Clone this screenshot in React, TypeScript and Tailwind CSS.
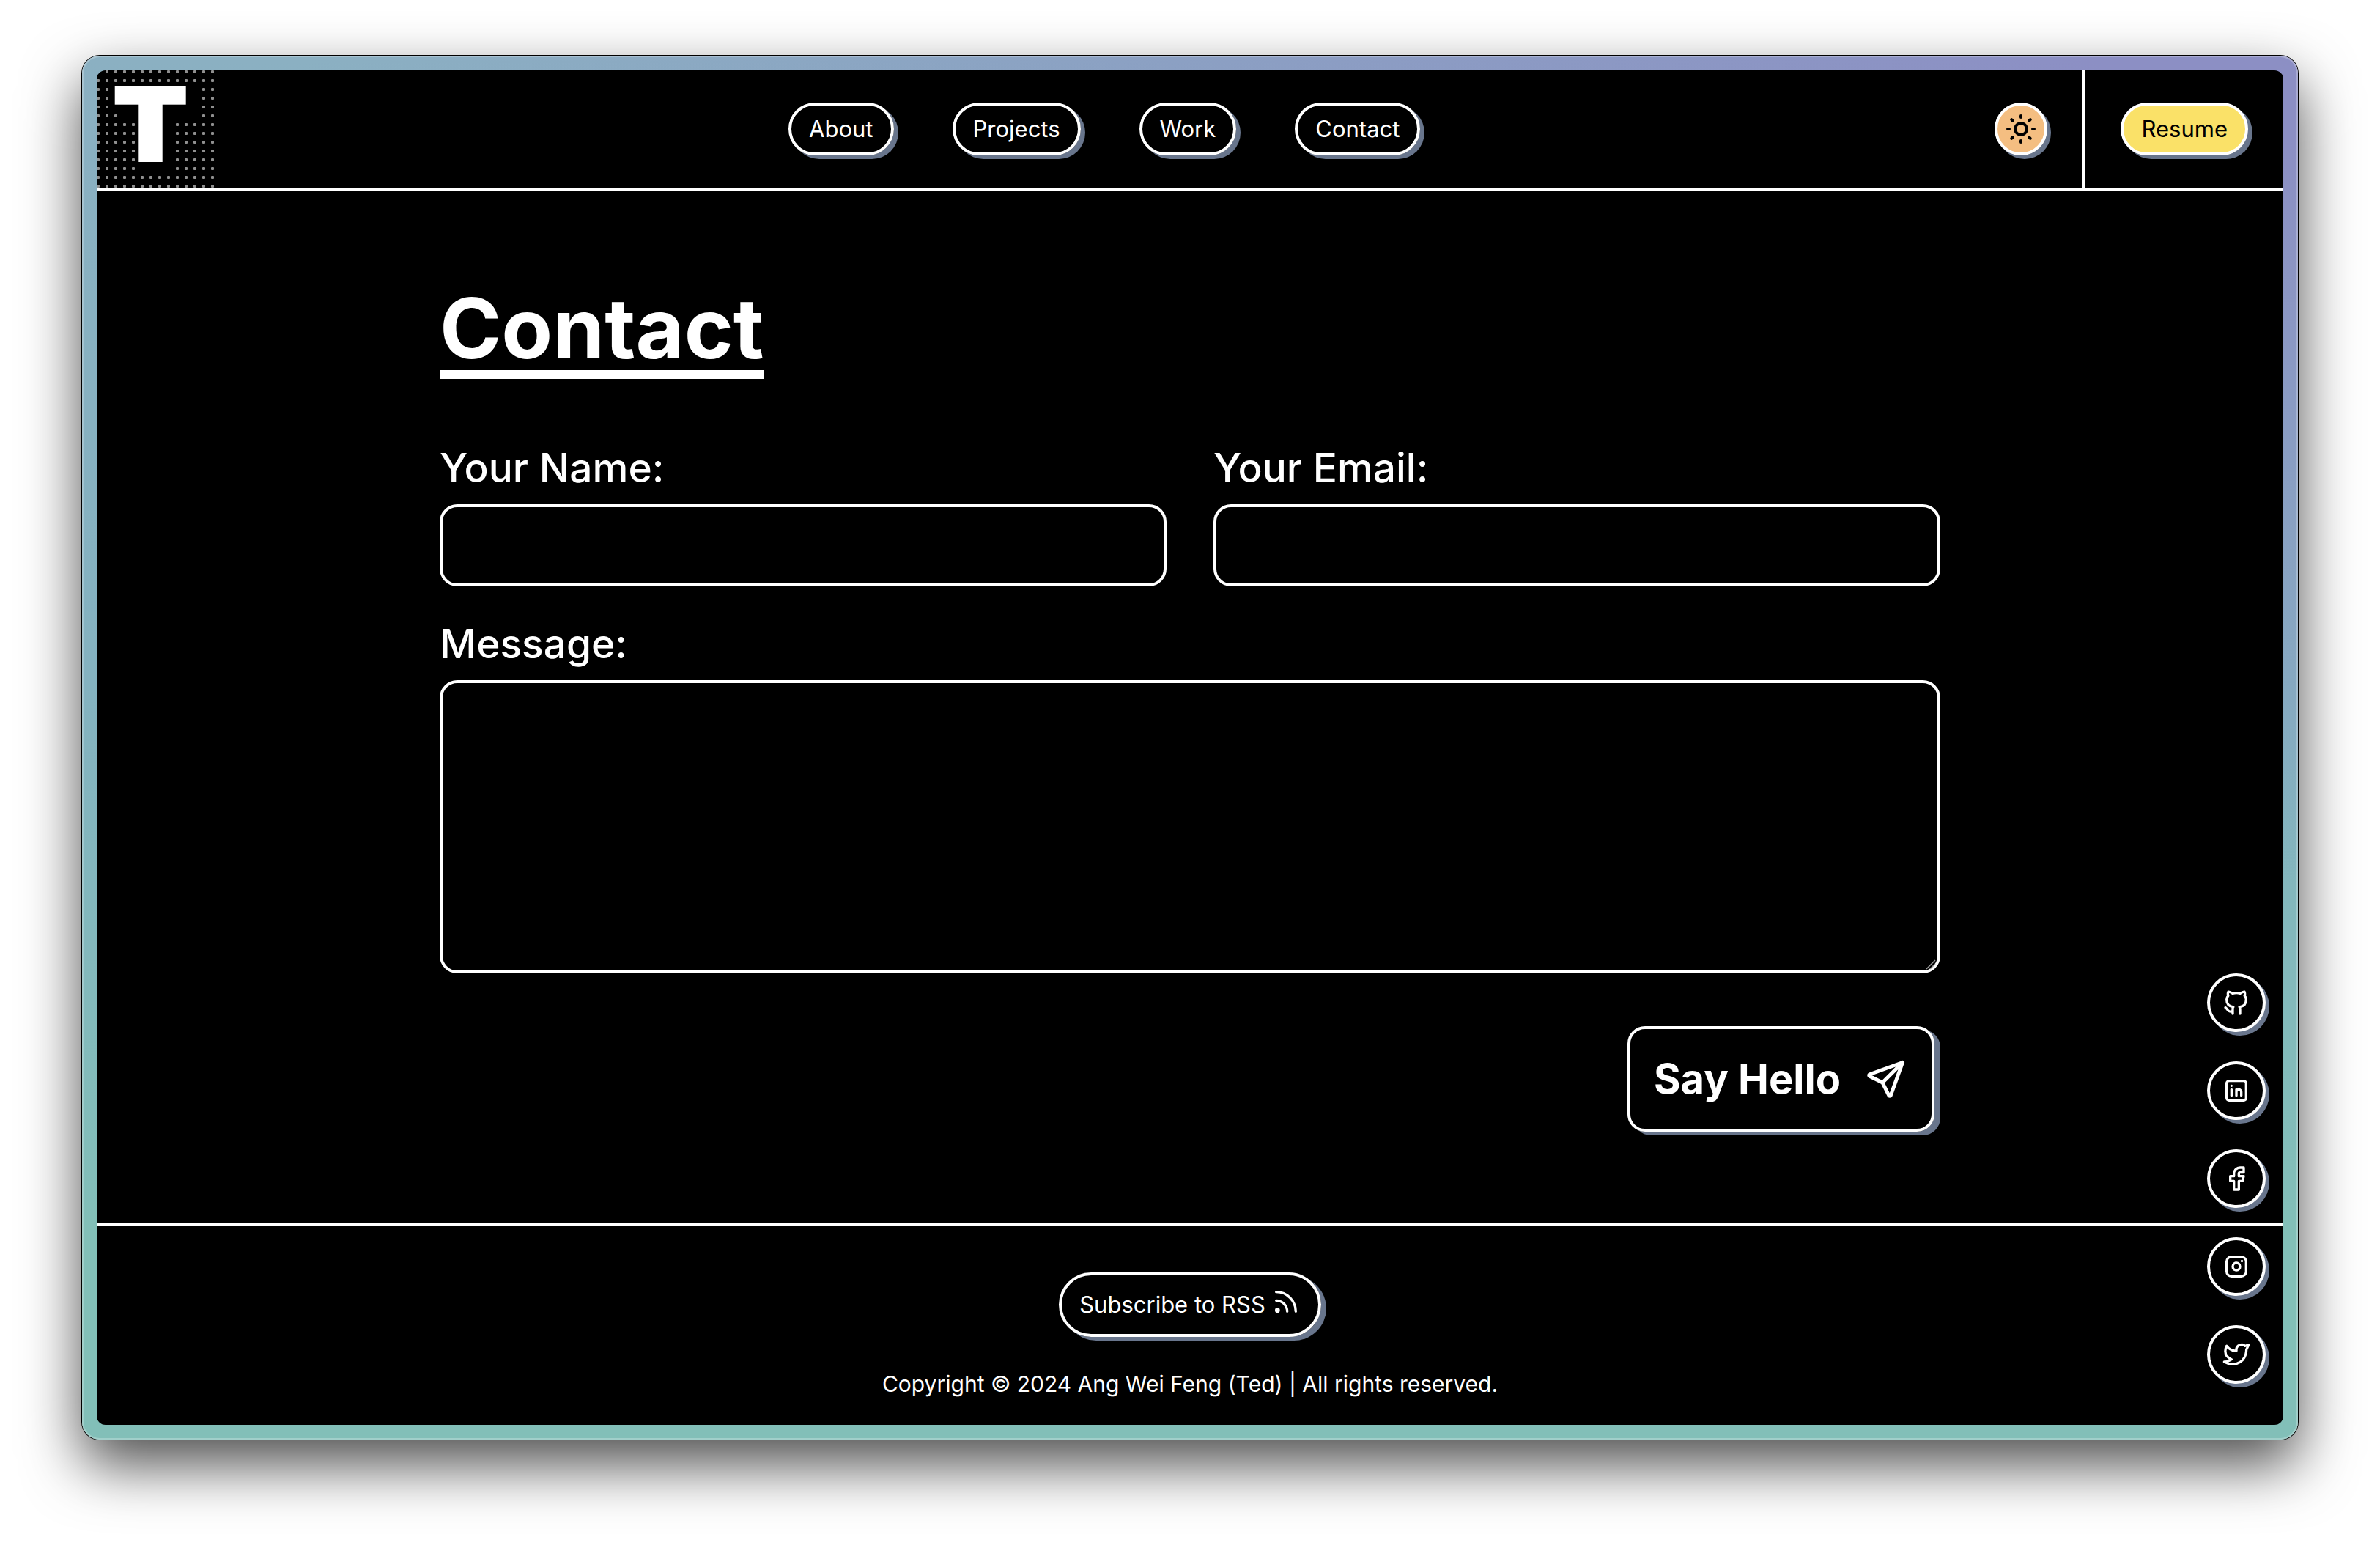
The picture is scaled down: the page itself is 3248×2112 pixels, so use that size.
import React from "react";

const DOT_ROWS = [
  "11111111111111",
  "11111111111111",
  "11000000000011",
  "11000000000011",
  "11000000000011",
  "11100000000011",
  "11111000011111",
  "11111000011111",
  "11111000011111",
  "11111000011111",
  "11111000011111",
  "11111000011111",
  "11111111111111",
  "11111111111111",
];

function Logo() {
  return (
    <svg viewBox="0 0 160 160" className="size-full" role="img" aria-label="T">
      {DOT_ROWS.flatMap((row, y) =>
        row.split("").map((on, x) =>
          on === "1" ? (
            <rect key={`${x}-${y}`} x={x * 12} y={y * 12} width={4} height={4} rx={1} fill="#8f8f8f" />
          ) : null,
        ),
      )}
      <rect x={24.7} y={21.3} width={97} height={25.4} fill="#fff" />
      <rect x={57.3} y={21.3} width={32.4} height={103.7} fill="#fff" />
    </svg>
  );
}

function Icon({ className, children }: { className: string; children: React.ReactNode }) {
  return (
    <svg
      viewBox="0 0 24 24"
      className={className}
      fill="none"
      stroke="currentColor"
      strokeWidth={2}
      strokeLinecap="round"
      strokeLinejoin="round"
      aria-hidden="true"
    >
      {children}
    </svg>
  );
}

const socials = [
  {
    label: "GitHub",
    icon: (
      <path d="M9 19c-4.3 1.4 -4.3 -2.5 -6 -3m12 5v-3.5c0 -1 .1 -1.4 -.5 -2c2.8 -.3 5.5 -1.4 5.5 -6a4.6 4.6 0 0 0 -1.3 -3.2a4.2 4.2 0 0 0 -.1 -3.2s-1.1 -.3 -3.5 1.3a12.3 12.3 0 0 0 -6.2 0c-2.4 -1.6 -3.5 -1.3 -3.5 -1.3a4.2 4.2 0 0 0 -.1 3.2a4.6 4.6 0 0 0 -1.3 3.2c0 4.6 2.7 5.7 5.5 6c-.6 .6 -.6 1.2 -.5 2v3.5" />
    ),
  },
  {
    label: "LinkedIn",
    icon: (
      <>
        <rect x="4" y="4" width="16" height="16" rx="2" />
        <path d="M8 11v5M8 8v.01M12 16v-5M16 16v-3a2 2 0 0 0 -4 0" />
      </>
    ),
  },
  {
    label: "Facebook",
    icon: <path d="M7 10v4h3v7h4v-7h3l1 -4h-4v-2a1 1 0 0 1 1 -1h3v-4h-3a5 5 0 0 0 -5 5v2h-3" />,
  },
  {
    label: "Instagram",
    icon: (
      <>
        <rect x="4" y="4" width="16" height="16" rx="4" />
        <circle cx="12" cy="12" r="3" />
        <path d="M16.5 7.5v.01" />
      </>
    ),
  },
  {
    label: "Twitter",
    icon: (
      <path d="M22 4.01c-1 .49 -1.98 .689 -3 .99c-1.121 -1.265 -2.783 -1.335 -4.38 -.737s-2.643 2.06 -2.62 3.737v1c-3.245 .083 -6.135 -1.395 -8 -4c0 0 -4.182 7.433 4 11c-1.872 1.247 -3.739 2.088 -6 2c3.308 1.803 6.913 2.423 10.034 1.517c3.58 -1.04 6.522 -3.723 7.651 -7.742a13.84 13.84 0 0 0 .497 -3.753c0 -.249 1.51 -2.772 1.818 -4.013z" />
    ),
  },
];

const pill =
  "flex h-[72px] items-center rounded-full border-4 border-white px-6 shadow-[6px_5px_0_#68758c]";
const label = "block text-[55px] leading-[84px] font-medium";
const field = "mt-2 block w-full rounded-3xl border-4 border-white bg-black px-6 text-[40px] outline-none";

export default function App() {
  return (
    <div className="flex min-h-screen flex-col bg-white px-28 pt-19 pb-37 font-[Inter,sans-serif] text-[31px] leading-10 text-white">
      <div className="flex grow flex-col rounded-3xl bg-[radial-gradient(ellipse_90%_60%_at_100%_0%,#8c8fc4_10%,#8c8fc400_100%),linear-gradient(180deg,#8bb0c2_0%,#84b2c0_45%,#82bfb8_85%)] p-5 shadow-[inset_0_0_0_2px_#ffffff40,0_0_0_1px_#000,0_34px_80px_#000000b3]">
        <div className="relative flex grow flex-col overflow-hidden rounded-xl bg-black">
          <header className="flex h-41 items-center justify-between border-b-4 border-white">
            <a href="#home" aria-label="Home" className="block size-40">
              <Logo />
            </a>
            <nav className="flex gap-20">
              <a href="#about" className={pill}>About</a>
              <a href="#projects" className={pill}>Projects</a>
              <a href="#work" className={pill}>Work</a>
              <a href="#contact" className={pill}>Contact</a>
            </nav>
            <div className="flex items-center gap-12 self-stretch pr-12">
              <button
                type="button"
                aria-label="Toggle theme"
                className="grid size-[72px] place-items-center rounded-full border-4 border-white bg-[#f4be81] text-black shadow-[5px_5px_0_#68758c]"
              >
                <Icon className="size-12">
                  <circle cx="12" cy="12" r="4" />
                  <path d="M3 12h1m8 -9v1m8 8h1m-9 8v1m-6.4 -15.4l.7 .7m12.1 -.7l-.7 .7m0 11.4l.7 .7m-12.1 -.7l-.7 .7" />
                </Icon>
              </button>
              <div className="flex items-center self-stretch border-l-4 border-white pl-12">
                <a
                  href="#resume"
                  className="flex h-[72px] items-center rounded-full border-4 border-white bg-[#fae168] px-6 text-black shadow-[6px_5px_0_#68758c]"
                >
                  Resume
                </a>
              </div>
            </div>
          </header>

          <main className="mx-auto flex w-full max-w-[2048px] grow flex-col pt-30">
            <h1 className="self-start text-[114px] leading-[136px] font-bold underline decoration-[12px] underline-offset-[16px] [text-decoration-skip-ink:none]">
              Contact
            </h1>
            <form className="mt-20 flex flex-col" onSubmit={(e) => e.preventDefault()}>
              <div className="grid grid-cols-2 gap-16">
                <div>
                  <label htmlFor="name" className={label}>Your Name:</label>
                  <input id="name" type="text" className={`${field} h-28`} />
                </div>
                <div>
                  <label htmlFor="email" className={label}>Your Email:</label>
                  <input id="email" type="email" className={`${field} h-28`} />
                </div>
              </div>
              <div className="relative mt-9">
                <label htmlFor="message" className={label}>Message:</label>
                <textarea id="message" className={`${field} h-100 resize-none`} />
                <svg
                  viewBox="0 0 16 16"
                  className="pointer-events-none absolute right-1 bottom-1 size-4"
                  fill="none"
                  stroke="#9a9a9a"
                  strokeWidth={1.5}
                  aria-hidden="true"
                >
                  <path d="M1 14L13 2M6 14L13 7" />
                </svg>
              </div>
              <button
                type="submit"
                className="mt-18 mr-2 flex h-36 items-center gap-8 self-end rounded-3xl border-4 border-white px-8 text-[56px] font-bold shadow-[8px_5px_0_#68758c]"
              >
                Say Hello
                <Icon className="size-15">
                  <path d="M10 14l11 -11M21 3l-6.5 18a.55 .55 0 0 1 -1 0l-3.5 -7l-7 -3.5a.55 .55 0 0 1 0 -1l18 -6.5" />
                </Icon>
              </button>
            </form>
          </main>

          <footer className="flex h-69 flex-col items-center border-t-4 border-white pt-16">
            <a
              href="#rss"
              className="flex h-22 items-center gap-2 rounded-full border-4 border-white px-6 shadow-[7px_5px_0_#68758c]"
            >
              Subscribe to RSS
              <Icon className="mb-2 size-10">
                <circle cx="5" cy="19" r="1" />
                <path d="M4 4a16 16 0 0 1 16 16M4 11a9 9 0 0 1 9 9" />
              </Icon>
            </a>
            <p className="mt-11 text-[30px]">Copyright © 2024 Ang Wei Feng (Ted) | All rights reserved.</p>
          </footer>

          <aside className="absolute right-6 bottom-14 flex flex-col gap-10">
            {socials.map((s) => (
              <a
                key={s.label}
                href={`#${s.label.toLowerCase()}`}
                aria-label={s.label}
                className="grid size-20 place-items-center rounded-full border-4 border-white bg-black shadow-[5px_5px_0_#68758c]"
              >
                <Icon className="size-10">{s.icon}</Icon>
              </a>
            ))}
          </aside>
        </div>
      </div>
    </div>
  );
}
